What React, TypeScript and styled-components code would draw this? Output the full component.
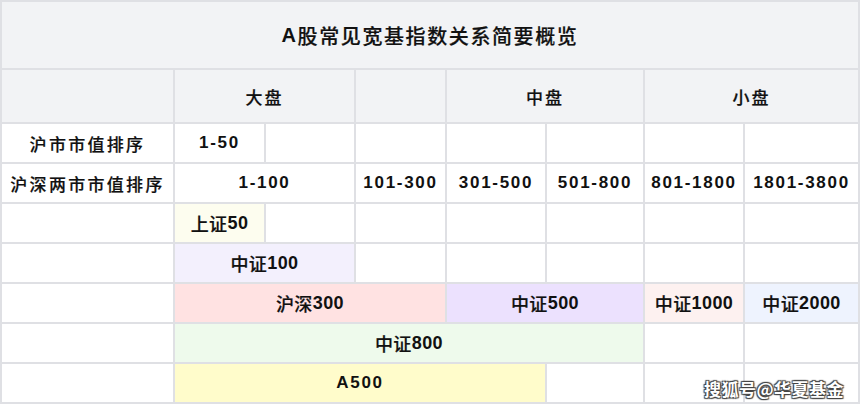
import React from "react";
import styled, { createGlobalStyle } from "styled-components";

const Global = createGlobalStyle`
  html, body { margin: 0; padding: 0; background: #ffffff; }
  #root { width: 862px; height: 408px; }
`;

const Wrap = styled.div`
  position: relative;
  width: 862px;
  height: 408px;
`;

const Table = styled.div`
  display: grid;
  grid-template-columns: 171px 89px 88px 89px 98px 96px 98px 113px;
  grid-template-rows: 66px 52px repeat(7, 38px);
  gap: 2px;
  padding: 2px;
  width: fit-content;
  background: #dfe0e4;
  font-family: "Liberation Sans", "Noto Sans CJK SC", sans-serif;
  color: #111;
`;

const Cell = styled.div<{ $span?: number; $bg?: string }>`
  grid-column: span ${(p) => p.$span ?? 1};
  background: ${(p) => p.$bg ?? "#ffffff"};
  display: flex;
  align-items: center;
  justify-content: center;
  font-size: 17px;
  font-weight: 700;
  letter-spacing: 1.7px;
  white-space: nowrap;
`;

const Label = styled(Cell)`
  letter-spacing: 2.3px;
`;

const IndexCell = styled(Cell)`
  font-weight: 700;
  letter-spacing: 0.4px;
  font-size: 18px;
`;

const Han = styled.span`
  font-family: "Noto Sans CJK SC", sans-serif;
  font-weight: 500;
  -webkit-text-stroke: 0.2px #111;
`;

const Title = styled(Cell)`
  grid-column: 1 / -1;
  background: #f2f3f5;
  font-size: 20px;
  letter-spacing: 1.6px;
`;

const Head = styled(Cell)`
  background: #f2f3f5;
  letter-spacing: 2px;
`;

const Watermark = styled.div`
  position: absolute;
  left: 704px;
  top: 376px;
  font-family: "Noto Sans CJK SC", sans-serif;
  font-size: 17px;
  font-weight: 700;
  color: #ffffff;
  letter-spacing: 0.5px;
  text-shadow: 0 0 1px #444, 1px 1px 1px #444, -1px -1px 1px #444, 1px -1px 1px #444, -1px 1px 1px #444;
`;

const Empty = ({ n }: { n: number }) => (
  <>
    {Array.from({ length: n }).map((_, i) => (
      <Cell key={i} />
    ))}
  </>
);

export default function App() {
  return (
    <Wrap>
      <Global />
      <Table>
        <Title>A<Han>股常见宽基指数关系简要概览</Han></Title>

        <Head />
        <Head $span={2}><Han>大盘</Han></Head>
        <Head />
        <Head $span={2}><Han>中盘</Han></Head>
        <Head $span={2}><Han>小盘</Han></Head>

        <Label><Han>沪市市值排序</Han></Label>
        <Cell>1-50</Cell>
        <Empty n={6} />

        <Label><Han>沪深两市市值排序</Han></Label>
        <Cell $span={2}>1-100</Cell>
        <Cell>101-300</Cell>
        <Cell>301-500</Cell>
        <Cell>501-800</Cell>
        <Cell>801-1800</Cell>
        <Cell>1801-3800</Cell>

        <Cell />
        <IndexCell $bg="#fdfdef"><Han>上证</Han>50</IndexCell>
        <Empty n={6} />

        <Cell />
        <IndexCell $span={2} $bg="#f3f0fd"><Han>中证</Han>100</IndexCell>
        <Empty n={5} />

        <Cell />
        <IndexCell $span={3} $bg="#ffe2e2"><Han>沪深</Han>300</IndexCell>
        <IndexCell $span={2} $bg="#ece1fe"><Han>中证</Han>500</IndexCell>
        <IndexCell $bg="#fdf1f0"><Han>中证</Han>1000</IndexCell>
        <IndexCell $bg="#eef3fe"><Han>中证</Han>2000</IndexCell>

        <Cell />
        <IndexCell $span={5} $bg="#eefaec"><Han>中证</Han>800</IndexCell>
        <Empty n={2} />

        <Cell />
        <Cell $span={4} $bg="#fffccb">A500</Cell>
        <Empty n={3} />
      </Table>
      <Watermark>搜狐号@华夏基金</Watermark>
    </Wrap>
  );
}
